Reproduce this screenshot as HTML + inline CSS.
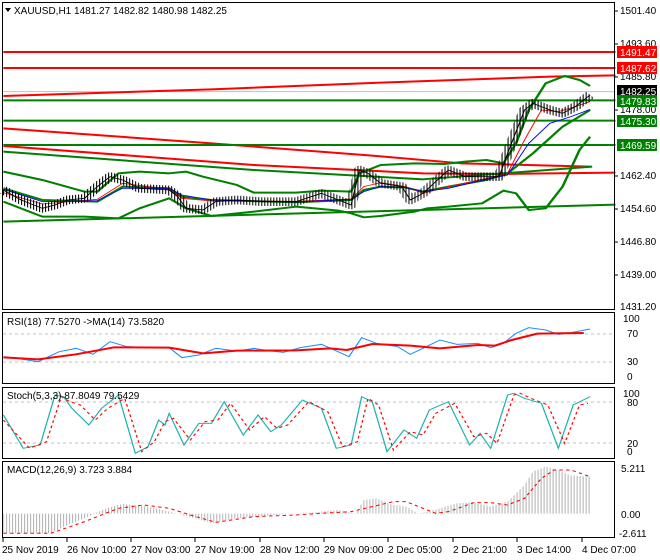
<!DOCTYPE html>
<html><head><meta charset="utf-8"><style>
html,body{margin:0;padding:0;background:#fff;}
svg{display:block;font-family:"Liberation Sans",sans-serif;font-size:10px;}
</style></head><body>
<svg width="660" height="560" viewBox="0 0 660 560" xmlns="http://www.w3.org/2000/svg">
<defs>
 <pattern id="stk" patternUnits="userSpaceOnUse" width="7.1" height="20"><rect x="0" y="0" width="2.4" height="20" fill="#000"/></pattern>
 <pattern id="hst" patternUnits="userSpaceOnUse" width="7.1" height="20"><rect x="0" y="0" width="2.4" height="20" fill="#b4b4b4"/></pattern>
</defs>
<rect width="660" height="560" fill="#fff"/>
<g transform="scale(0.4230,0.3333)" fill="none" stroke-linejoin="round">
 <line x1="8" y1="275" x2="1455" y2="275" stroke="#c0c0c0" stroke-width="3"/>
 <line x1="8" y1="156" x2="1455" y2="156" stroke="#f00" stroke-width="6"/>
 <line x1="8" y1="204" x2="1455" y2="204" stroke="#f00" stroke-width="6"/>
 <polyline points="8,288 500,268 900,248 1300,230 1455,226" stroke="#f00" stroke-width="6"/>
 <polyline points="8,385 500,430 880,467 1090,490 1395,500" stroke="#f00" stroke-width="6"/>
 <polyline points="8,438 600,495 1000,520 1180,522 1455,518" stroke="#f00" stroke-width="6"/>
 <line x1="8" y1="301" x2="1455" y2="301" stroke="#008000" stroke-width="6"/>
 <line x1="8" y1="362" x2="1455" y2="362" stroke="#008000" stroke-width="6"/>
 <line x1="8" y1="435" x2="1455" y2="435" stroke="#008000" stroke-width="6"/>
 <polyline points="8,455 600,510 1000,538 1400,500" stroke="#008000" stroke-width="6"/>
 <line x1="8" y1="665" x2="1455" y2="614" stroke="#008000" stroke-width="6"/>
 <polyline points="8,515 100,540 200,575 230,575 280,520 330,515 400,520 440,515 480,530 560,555 600,578 700,578 760,572 830,575 850,520 900,495 980,490 1050,492 1100,485 1150,480 1190,490 1220,430 1250,330 1290,250 1335,228 1370,240 1395,258" stroke="#008000" stroke-width="6"/>
 <polyline points="8,605 100,650 200,650 280,655 330,625 400,595 440,625 500,648 600,635 700,620 800,632 830,640 860,652 900,648 980,635 1010,625 1060,620 1140,610 1190,572 1220,580 1250,630 1290,625 1330,560 1370,450 1395,410" stroke="#008000" stroke-width="6"/>
 <polyline points="8,565 100,600 230,605 290,560 400,565 430,590 500,600 700,607 830,600 860,570 900,560 960,563 1000,575 1060,560 1150,540 1200,520 1260,460 1330,380 1395,330" stroke="#008000" stroke-width="6"/>
 <polyline points="8,578 100,612 230,598 290,550 400,568 430,595 500,603 700,604 830,597 860,560 900,548 960,560 1000,580 1060,560 1150,535 1200,520 1240,420 1280,330 1320,335 1360,320 1395,305" stroke="#f00" stroke-width="2.5"/>
 <polyline points="8,568 100,605 230,602 290,565 400,565 430,585 500,600 700,606 830,598 860,575 900,560 960,563 1000,575 1060,565 1150,538 1200,525 1250,430 1300,370 1350,350 1395,328" stroke="#00f" stroke-width="2.5"/>
 <polyline points="8,570 50,600 100,625 130,615 160,600 200,595 230,560 260,530 290,540 330,565 400,570 420,590 440,625 480,630 510,605 560,600 620,605 700,605 760,580 800,600 830,615 850,510 870,520 900,550 950,560 970,600 1000,580 1030,545 1060,510 1100,530 1150,530 1180,530 1200,460 1240,330 1260,310 1300,330 1330,340 1360,320 1395,285" stroke="url(#stk)" stroke-width="26"/>
 <polyline points="8,570 50,600 100,625 130,615 160,600 200,595 230,560 260,530 290,540 330,565 400,570 420,590 440,625 480,630 510,605 560,600 620,605 700,605 760,580 800,600 830,615 850,510 870,520 900,550 950,560 970,600 1000,580 1030,545 1060,510 1100,530 1150,530 1180,530 1200,460 1240,330 1260,310 1300,330 1330,340 1360,320 1395,285" stroke="#000" stroke-width="2.5"/>
</g>
<g fill="none" stroke="#000" stroke-width="1">
 <rect x="2.5" y="2.5" width="612" height="307"/>
 <rect x="2.5" y="312.5" width="612" height="71"/>
 <rect x="2.5" y="387.5" width="612" height="71"/>
 <rect x="2.5" y="461.5" width="612" height="76"/>
</g>
<path d="M5,8 L11,8 L8,12 Z" fill="#000"/>
<text x="14" y="14" fill="#000">XAUUSD,H1  1481.27 1482.82 1480.98 1482.25</text>
<g fill="#000">
 <text x="620" y="14">1501.40</text>
 <text x="620" y="47">1493.60</text>
 <text x="620" y="80">1485.80</text>
 <text x="620" y="113">1478.00</text>
 <text x="620" y="179">1462.40</text>
 <text x="620" y="212">1454.60</text>
 <text x="620" y="245">1446.80</text>
 <text x="620" y="278">1439.00</text>
 <text x="620" y="310">1431.20</text>
</g>
<g stroke="#000"><line x1="615" y1="11" x2="618" y2="11"/><line x1="615" y1="44" x2="618" y2="44"/><line x1="615" y1="77" x2="618" y2="77"/><line x1="615" y1="110" x2="618" y2="110"/><line x1="615" y1="176" x2="618" y2="176"/><line x1="615" y1="209" x2="618" y2="209"/><line x1="615" y1="242" x2="618" y2="242"/><line x1="615" y1="275" x2="618" y2="275"/></g>
<rect x="617" y="46" width="40" height="12" fill="#f00"/><text x="620" y="56" fill="#fff">1491.47</text>
<rect x="617" y="62" width="40" height="12" fill="#f00"/><text x="620" y="72" fill="#fff">1487.62</text>
<rect x="617" y="85" width="40" height="12" fill="#000"/><text x="620" y="95" fill="#fff">1482.25</text>
<rect x="617" y="95" width="40" height="12" fill="#008000"/><text x="620" y="105" fill="#fff">1479.83</text>
<rect x="617" y="115" width="40" height="12" fill="#008000"/><text x="620" y="125" fill="#fff">1475.30</text>
<rect x="617" y="139" width="40" height="12" fill="#008000"/><text x="620" y="149" fill="#fff">1469.59</text>

<text x="7" y="325" fill="#000">RSI(18) 77.5270  -&gt;MA(14) 73.5820</text>
<g stroke="#c0c0c0" stroke-dasharray="3,3"><line x1="3" y1="334" x2="614" y2="334"/><line x1="3" y1="362" x2="614" y2="362"/></g>
<g transform="translate(0,305) scale(0.4230,0.3333)" fill="none">
 <polyline points="8,155 40,160 90,170 140,140 180,130 220,148 260,110 300,125 350,128 400,128 430,158 470,150 510,130 560,138 600,130 640,138 670,142 710,128 760,118 790,135 825,155 855,98 890,115 940,125 970,148 1000,130 1040,105 1080,118 1130,115 1160,128 1190,115 1220,85 1250,68 1290,75 1320,88 1350,83 1395,72" stroke="#1e90ff" stroke-width="3"/>
 <polyline points="8,157 90,163 180,148 270,127 400,128 480,145 560,137 700,136 780,130 820,135 880,117 970,122 1040,130 1130,120 1170,122 1210,105 1270,86 1380,84" stroke="#f00" stroke-width="6"/>
</g>
<g fill="#000"><text x="623" y="322">100</text><text x="627" y="337">70</text><text x="627" y="365">30</text><text x="627" y="380">0</text></g>

<g stroke="#c0c0c0" stroke-dasharray="3,3"><line x1="3" y1="402" x2="614" y2="402"/><line x1="3" y1="443" x2="614" y2="443"/></g>
<g transform="translate(0,305) scale(0.4230,0.3333)" fill="none">
 <polyline points="8,330 55,430 95,420 130,270 150,275 170,310 210,360 240,310 280,270 320,445 350,425 375,345 390,360 400,325 435,420 470,355 500,355 530,290 575,390 610,330 640,380 665,360 715,285 760,310 795,430 830,420 855,275 880,290 915,440 955,375 985,400 1015,315 1060,290 1110,420 1135,385 1160,430 1200,270 1215,265 1240,280 1280,295 1320,430 1355,300 1395,275" stroke="#20b2aa" stroke-width="3"/>
 <polyline points="8,345 70,430 110,410 145,275 165,290 190,300 225,345 255,310 295,280 335,440 365,410 390,350 410,340 450,405 485,350 515,345 545,295 590,375 625,335 655,370 680,360 730,290 775,320 810,425 845,410 870,280 895,300 930,435 970,380 1000,390 1030,325 1075,295 1120,395 1150,385 1175,415 1215,270 1230,265 1255,280 1295,300 1335,415 1370,300 1390,295" stroke="#f00" stroke-width="3" stroke-dasharray="8,8"/>
</g>
<text x="7" y="399" fill="#000">Stoch(5,3,3) 87.8049 79.5429</text>
<g fill="#000"><text x="623" y="397">100</text><text x="627" y="406">80</text><text x="627" y="447">20</text><text x="627" y="455">0</text></g>

<g transform="translate(0,305) scale(0.4230,0.3333)" fill="none">
 <polygon points="8,685 120,685 160,660 200,640 250,610 290,597 350,605 420,626 500,655 560,640 650,630 740,622 800,615 840,625 860,585 890,580 930,600 960,605 990,626 1040,610 1080,595 1120,592 1160,605 1200,590 1240,540 1260,500 1290,485 1320,495 1350,512 1397,515 1397,626 8,626" fill="url(#hst)"/>
 <polyline points="8,685 120,685 200,650 280,610 340,600 400,610 450,630 510,652 600,635 700,630 760,625 830,620 880,605 930,590 960,590 1000,610 1030,625 1060,620 1120,593 1160,593 1200,600 1240,580 1280,520 1310,495 1350,495 1395,515" stroke="#f00" stroke-width="3" stroke-dasharray="8,8"/>
</g>
<text x="7" y="473" fill="#000">MACD(12,26,9) 3.723 3.884</text>
<g fill="#000"><text x="621" y="472">5.211</text><text x="621" y="518">0.00</text><text x="619" y="537">-2.611</text></g>

<g fill="#000">
 <text x="2" y="553">25 Nov 2019</text>
 <text x="67" y="553">26 Nov 10:00</text>
 <text x="131" y="553">27 Nov 03:00</text>
 <text x="195" y="553">27 Nov 19:00</text>
 <text x="260" y="553">28 Nov 12:00</text>
 <text x="324" y="553">29 Nov 09:00</text>
 <text x="388" y="553">2 Dec 05:00</text>
 <text x="453" y="553">2 Dec 21:00</text>
 <text x="517" y="553">3 Dec 14:00</text>
 <text x="582" y="553">4 Dec 07:00</text>
</g>
<g stroke="#000"><line x1="3" y1="538" x2="3" y2="542"/><line x1="67" y1="538" x2="67" y2="542"/><line x1="131" y1="538" x2="131" y2="542"/><line x1="195" y1="538" x2="195" y2="542"/><line x1="260" y1="538" x2="260" y2="542"/><line x1="324" y1="538" x2="324" y2="542"/><line x1="388" y1="538" x2="388" y2="542"/><line x1="453" y1="538" x2="453" y2="542"/><line x1="517" y1="538" x2="517" y2="542"/><line x1="582" y1="538" x2="582" y2="542"/></g>
</svg>
</body></html>
